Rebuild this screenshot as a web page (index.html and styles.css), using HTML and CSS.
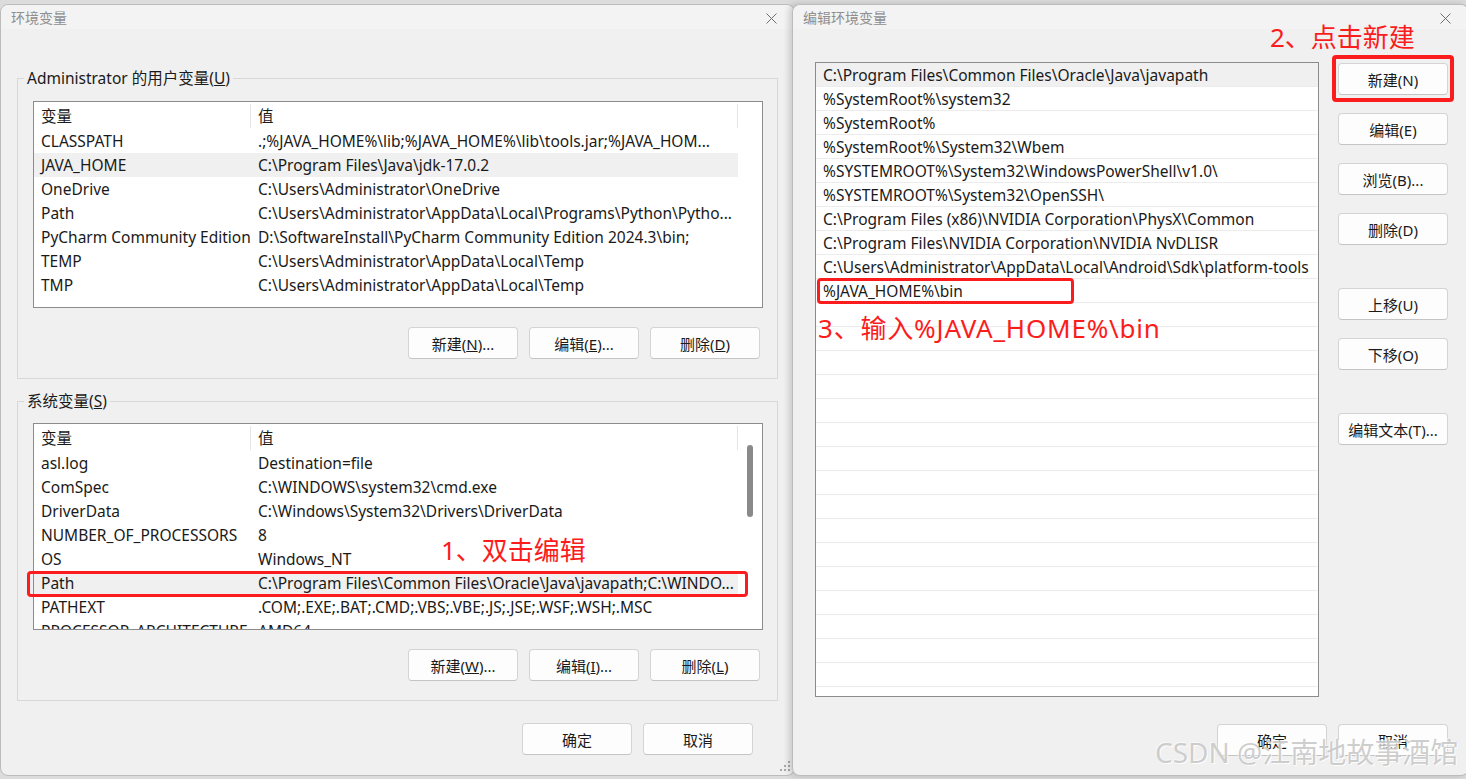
FILE: index.html
```html
<!DOCTYPE html>
<html lang="zh-CN">
<head>
  <meta charset="UTF-8">
  <title>环境变量</title>
  <link rel="stylesheet" href="styles.css">
</head>
<body>
  <div class="desktop">

    <div class="window win-env">
      <div class="titlebar">
        <span class="title">环境变量</span>
        <span class="close"><svg width="11" height="11" viewBox="0 0 11 11"><path d="M0.5 0.5L10.5 10.5M10.5 0.5L0.5 10.5" stroke="#6e6e6e" stroke-width="1"/></svg></span>
      </div>
      <div class="body">
        <fieldset class="group">
          <legend>Administrator 的用户变量(<u>U</u>)</legend>
          <div class="listview">
            <div class="lv-head"><span>变量</span><span>值</span></div>
            <div class="lv-row"><span>CLASSPATH</span><span>.;%JAVA_HOME%\lib;%JAVA_HOME%\lib\tools.jar;%JAVA_HOM...</span></div>
            <div class="lv-row selected"><span>JAVA_HOME</span><span>C:\Program Files\Java\jdk-17.0.2</span></div>
            <div class="lv-row"><span>OneDrive</span><span>C:\Users\Administrator\OneDrive</span></div>
            <div class="lv-row"><span>Path</span><span>C:\Users\Administrator\AppData\Local\Programs\Python\Pytho...</span></div>
            <div class="lv-row"><span>PyCharm Community Edition</span><span>D:\SoftwareInstall\PyCharm Community Edition 2024.3\bin;</span></div>
            <div class="lv-row"><span>TEMP</span><span>C:\Users\Administrator\AppData\Local\Temp</span></div>
            <div class="lv-row"><span>TMP</span><span>C:\Users\Administrator\AppData\Local\Temp</span></div>
          </div>
          <div class="btn-row">
            <button class="btn">新建(<u>N</u>)...</button>
            <button class="btn">编辑(<u>E</u>)...</button>
            <button class="btn">删除(<u>D</u>)</button>
          </div>
        </fieldset>

        <fieldset class="group group-sys">
          <legend>系统变量(<u>S</u>)</legend>
          <div class="listview">
            <div class="lv-head"><span>变量</span><span>值</span></div>
            <div class="lv-row"><span>asl.log</span><span>Destination=file</span></div>
            <div class="lv-row"><span>ComSpec</span><span>C:\WINDOWS\system32\cmd.exe</span></div>
            <div class="lv-row"><span>DriverData</span><span>C:\Windows\System32\Drivers\DriverData</span></div>
            <div class="lv-row"><span>NUMBER_OF_PROCESSORS</span><span>8</span></div>
            <div class="lv-row"><span>OS</span><span>Windows_NT</span></div>
            <div class="lv-row selected"><span>Path</span><span>C:\Program Files\Common Files\Oracle\Java\javapath;C:\WINDO...</span></div>
            <div class="lv-row"><span>PATHEXT</span><span>.COM;.EXE;.BAT;.CMD;.VBS;.VBE;.JS;.JSE;.WSF;.WSH;.MSC</span></div>
            <div class="lv-row"><span>PROCESSOR_ARCHITECTURE</span><span>AMD64</span></div>
            <div class="scroll-thumb"></div>
          </div>
          <div class="btn-row">
            <button class="btn">新建(<u>W</u>)...</button>
            <button class="btn">编辑(<u>I</u>)...</button>
            <button class="btn">删除(<u>L</u>)</button>
          </div>
        </fieldset>

        <div class="dialog-actions">
          <button class="btn">确定</button>
          <button class="btn">取消</button>
        </div>
      </div>
      <svg class="grip" width="10" height="10" viewBox="0 0 10 10">
        <rect x="8" y="0" width="2" height="2" fill="#a8a8a8"/>
        <rect x="4" y="4" width="2" height="2" fill="#a8a8a8"/>
        <rect x="8" y="4" width="2" height="2" fill="#a8a8a8"/>
        <rect x="0" y="8" width="2" height="2" fill="#a8a8a8"/>
        <rect x="4" y="8" width="2" height="2" fill="#a8a8a8"/>
        <rect x="8" y="8" width="2" height="2" fill="#a8a8a8"/>
      </svg>
    </div>

    <div class="window win-edit">
      <div class="titlebar">
        <span class="title">编辑环境变量</span>
        <span class="close"><svg width="11" height="11" viewBox="0 0 11 11"><path d="M0.5 0.5L10.5 10.5M10.5 0.5L0.5 10.5" stroke="#6e6e6e" stroke-width="1"/></svg></span>
      </div>
      <div class="body edit-body">
        <div class="edit-main">
          <ul class="path-list">
            <li class="selected">C:\Program Files\Common Files\Oracle\Java\javapath</li>
            <li>%SystemRoot%\system32</li>
            <li>%SystemRoot%</li>
            <li>%SystemRoot%\System32\Wbem</li>
            <li>%SYSTEMROOT%\System32\WindowsPowerShell\v1.0\</li>
            <li>%SYSTEMROOT%\System32\OpenSSH\</li>
            <li>C:\Program Files (x86)\NVIDIA Corporation\PhysX\Common</li>
            <li>C:\Program Files\NVIDIA Corporation\NVIDIA NvDLISR</li>
            <li>C:\Users\Administrator\AppData\Local\Android\Sdk\platform-tools</li>
            <li>%JAVA_HOME%\bin</li>
            <li></li><li></li><li></li><li></li><li></li><li></li><li></li><li></li>
            <li></li><li></li><li></li><li></li><li></li><li></li><li></li><li></li>
            <li></li><li></li>
          </ul>
          <div class="side-buttons">
            <button class="btn">新建(N)</button>
            <button class="btn">编辑(E)</button>
            <button class="btn">浏览(B)...</button>
            <button class="btn">删除(D)</button>
            <button class="btn spaced">上移(U)</button>
            <button class="btn">下移(O)</button>
            <button class="btn spaced">编辑文本(T)...</button>
          </div>
        </div>
        <div class="dialog-actions edit-actions">
          <button class="btn">确定</button>
          <button class="btn">取消</button>
        </div>
      </div>
    </div>

    <div class="mark mark-path"></div>
    <div class="mark mark-new"></div>
    <div class="mark mark-bin"></div>
    <div class="note note-1">1、双击编辑</div>
    <div class="note note-2">2、点击新建</div>
    <div class="note note-3">3、输入%JAVA_HOME%\bin</div>
    <div class="watermark">CSDN @江南地故事酒馆</div>
  </div>
</body>
</html>
```

FILE: styles.css
```css
body {
  margin: 0;
  font-family: "Noto Sans", "Noto Sans CJK SC", sans-serif;
  font-size: 15.5px;
  color: #1a1a1a;
  overflow: hidden;
}
.desktop {
  position: relative;
  width: 1466px;
  height: 779px;
  overflow: hidden;
  background: #dcdcdc;
}
.window {
  position: absolute;
  top: 4px;
  height: 772px;
  box-sizing: border-box;
  background: #f0f0f0;
  border: 1px solid #bcbcbc;
  border-radius: 8px;
  display: flex;
  flex-direction: column;
}
.win-env {
  left: 0;
  width: 795px;
}
.win-edit {
  left: 792px;
  width: 677px;
  box-shadow: -3px 0 6px rgba(0, 0, 0, 0.16);
}
.titlebar {
  height: 24px;
  display: flex;
  align-items: center;
  justify-content: space-between;
  padding: 0 0 0 10px;
  background: #f3f3f3;
  border-radius: 8px 8px 0 0;
}
.title {
  font-family: "Noto Sans CJK SC", sans-serif;
  font-size: 14px;
  color: #8f8f8f;
  line-height: 20px;
}
.close {
  width: 46px;
  display: flex;
  justify-content: center;
  padding-top: 3px;
}
.body {
  padding: 0 16px;
}

/* group boxes */
.group {
  margin: 39px 0 0;
  padding: 13px 14px 19px 15px;
  border: 1px solid #d8d8d8;
  min-width: 0;
}
.group-sys {
  margin-top: 12px;
  padding-top: 12px;
}
.group legend {
  margin-left: -9px;
  padding: 0 3px;
  line-height: 20px;
}
.listview {
  position: relative;
  height: 207px;
  box-sizing: border-box;
  border: 1px solid #8c8c8c;
  background: #fff;
  overflow: hidden;
}
.lv-head, .lv-row {
  display: grid;
  grid-template-columns: 217px 487px;
  width: 704px;
}
.lv-head {
  height: 27px;
  line-height: 27px;
}
.lv-head span {
  border-right: 1px solid #e5e5e5;
  margin: 2px 0 1px;
  line-height: 24px;
}
.lv-row {
  height: 24px;
  line-height: 24px;
}
.lv-head span, .lv-row span {
  padding-left: 7px;
  white-space: nowrap;
  overflow: hidden;
  text-overflow: ellipsis;
}
.lv-row.selected {
  background: #f0f0f0;
}
.scroll-thumb {
  position: absolute;
  left: 713px;
  top: 21px;
  width: 6px;
  height: 72px;
  border-radius: 3px;
  background: #8a8a8a;
}

/* buttons */
.btn {
  width: 110px;
  height: 32px;
  padding: 0;
  box-sizing: border-box;
  background: #fdfdfd;
  border: 1px solid #d4d4d4;
  border-bottom-color: #c4c4c4;
  border-radius: 4px;
  font-family: "Noto Sans", "Noto Sans CJK SC", sans-serif;
  font-size: 15px;
  color: #1a1a1a;
}
.btn-row {
  display: flex;
  justify-content: flex-end;
  gap: 11px;
  margin: 19px 3px 0 0;
}
.dialog-actions {
  display: flex;
  justify-content: flex-end;
  gap: 11px;
  margin: 22px 25px 0 0;
}

/* edit dialog */
.edit-body {
  padding: 33px 20px 0 22px;
}
.edit-main {
  display: flex;
}
.path-list {
  width: 504px;
  height: 635px;
  box-sizing: border-box;
  margin: 0;
  padding: 0;
  list-style: none;
  border: 1px solid #8c8c8c;
  background: #fff;
  overflow: hidden;
}
.path-list li {
  height: 24px;
  box-sizing: border-box;
  line-height: 21px;
  padding: 2px 0 0 7px;
  border-bottom: 1px solid #ececec;
  white-space: nowrap;
}
.path-list li.selected {
  background: #f0f0f0;
}
.side-buttons {
  display: flex;
  flex-direction: column;
  gap: 18px;
  margin-left: 19px;
  padding-top: 1px;
}
.side-buttons .spaced {
  margin-top: 25px;
}
.edit-actions {
  margin: 27px 0 0;
}

/* annotations */
.mark {
  position: absolute;
  box-sizing: border-box;
  border: 3px solid #fb1d1d;
  border-radius: 4px;
}
.mark-path {
  left: 27px;
  top: 571px;
  width: 721px;
  height: 26px;
}
.mark-new {
  left: 1332px;
  top: 55px;
  width: 122px;
  height: 47px;
  border-width: 4px;
}
.mark-bin {
  left: 817px;
  top: 278px;
  width: 257px;
  height: 26px;
}
.note {
  position: absolute;
  font-family: "Noto Sans", "Noto Sans CJK SC", sans-serif;
  font-size: 26px;
  line-height: 30px;
  color: #fb1d1d;
  white-space: nowrap;
}
.note-1 {
  left: 441px;
  top: 535px;
}
.note-2 {
  left: 1270px;
  top: 22px;
}
.note-3 {
  left: 818px;
  top: 313px;
  letter-spacing: 0.8px;
}
.watermark {
  position: absolute;
  left: 1155px;
  top: 734px;
  font-family: "Noto Sans", "Noto Sans CJK SC", sans-serif;
  font-size: 28px;
  line-height: 36px;
  color: rgba(190, 190, 190, 0.75);
  text-shadow: 1px 1px 0 rgba(255, 255, 255, 0.9), -1px -1px 0 rgba(255, 255, 255, 0.6);
  white-space: nowrap;
}
.grip {
  position: absolute;
  right: 4px;
  bottom: 4px;
}
```
